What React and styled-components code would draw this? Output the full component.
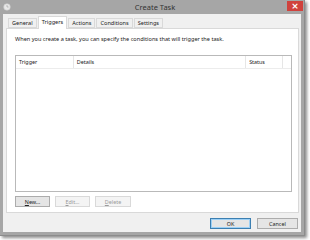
import React from 'react';
import styled, { createGlobalStyle } from 'styled-components';

const GlobalStyle = createGlobalStyle`
  body {
    margin: 0;
    background: #ffffff;
    font-family: "Noto Sans", "Open Sans", sans-serif;
  }
`

const tabs = ['General', 'Triggers', 'Actions', 'Conditions', 'Settings']
const columns = [
  { label: 'Trigger', width: 58 },
  { label: 'Details', width: 173 },
  { label: 'Status', width: 37 },
  { label: '', width: 8 },
]

export default function App() {
  return (
    <Stage>
      <GlobalStyle />
      <Window>
        <TitleBar>
          <AppIcon viewBox="0 0 8 8">
            <circle cx="4" cy="4" r="3.3" fill="#e8e8e8" stroke="#c9c9c9" strokeWidth="0.6" />
            <path d="M4 2v2h1.6" stroke="#9a9a9a" strokeWidth="0.6" fill="none" />
          </AppIcon>
          <Title>Create Task</Title>
          <Close>×</Close>
        </TitleBar>
        <Client>
          <TabRow>
            {tabs.map((t) => (
              <Tab key={t} $active={t === 'Triggers'}>{t}</Tab>
            ))}
          </TabRow>
          <Panel>
            <Intro>When you create a task, you can specify the conditions that will trigger the task.</Intro>
            <List>
              <Header>
                {columns.map((c, i) => (
                  <HeaderCell key={i} style={{ width: c.width }}>{c.label}</HeaderCell>
                ))}
              </Header>
            </List>
            <ListButtons>
              <Button $w={35}><u>N</u>ew...</Button>
              <Button $w={35} disabled><u>E</u>dit...</Button>
              <Button $w={36} disabled><u>D</u>elete</Button>
            </ListButtons>
          </Panel>
          <Footer>
            <Button $w={41} $default>OK</Button>
            <Button $w={41}>Cancel</Button>
          </Footer>
        </Client>
      </Window>
    </Stage>
  )
}

const Stage = styled.div`
  width: 310px;
  height: 240px;
  overflow: hidden;
  background: #ffffff;
`
const Window = styled.div`
  width: 304px;
  height: 235px;
  background: #a6a6a6;
  border-right: 1px solid #8c8c8c;
  border-bottom: 1px solid #8c8c8c;
  box-shadow: 2px 2px 3px rgba(0, 0, 0, 0.45);
  display: flex;
  flex-direction: column;
`
const TitleBar = styled.div`
  height: 14px;
  display: flex;
  align-items: flex-start;
  padding: 0 1px 0 2px;
`
const AppIcon = styled.svg`
  width: 8px;
  height: 8px;
  margin: 3px 0 0 1px;
`
const Title = styled.div`
  flex: 1;
  text-align: center;
  font-size: 7.5px;
  line-height: 14px;
  color: #333333;
  padding-left: 12px;
`
const Close = styled.div`
  width: 16px;
  min-width: 16px;
  height: 10px;
  margin-top: 1px;
  background: #d0423d;
  color: #ffffff;
  font-family: "DejaVu Sans", sans-serif;
  font-weight: bold;
  font-size: 9px;
  line-height: 10px;
  text-align: center;
`
const Client = styled.div`
  flex: 1;
  margin: 0 3px 3px 3px;
  background: #f0f0f0;
  display: flex;
  flex-direction: column;
  padding: 4px 2px 0 3px;
`
const TabRow = styled.div`
  display: flex;
  align-items: flex-end;
  height: 10px;
  padding-left: 2px;
  gap: 1px;
  position: relative;
  z-index: 1;
`
const Tab = styled.div`
  height: ${(p) => (p.$active ? '13px' : '10px')};
  margin-bottom: ${(p) => (p.$active ? '-1px' : '0')};
  padding: 0 3px;
  box-sizing: border-box;
  border: 1px solid #d9d9d9;
  border-bottom: ${(p) => (p.$active ? 'none' : '1px solid #d9d9d9')};
  background: ${(p) => (p.$active ? '#ffffff' : '#f0f0f0')};
  font-size: 5.6px;
  line-height: ${(p) => (p.$active ? '10px' : '8px')};
  color: #222;
  white-space: nowrap;
`
const Panel = styled.div`
  height: 185px;
  box-sizing: border-box;
  background: #ffffff;
  border: 1px solid #d9d9d9;
  display: flex;
  flex-direction: column;
  padding: 0 6px 0 8px;
`
const Intro = styled.div`
  font-size: 5.6px;
  color: #222;
  margin-top: 6px;
  height: 20px;
  white-space: nowrap;
`
const List = styled.div`
  height: 137px;
  box-sizing: border-box;
  border: 1px solid #b9b9b9;
  background: #ffffff;
`
const Header = styled.div`
  display: flex;
  height: 12px;
  border-bottom: 1px solid #ececec;
`
const HeaderCell = styled.div`
  box-sizing: border-box;
  height: 12px;
  padding-left: 3px;
  border-right: 1px solid #e6e6e6;
  font-size: 5.4px;
  line-height: 12px;
  color: #222;
  &:last-child {
    border-right: none;
  }
`
const ListButtons = styled.div`
  display: flex;
  gap: 5px;
  margin-top: 4px;
`
const Button = styled.button`
  width: ${(p) => p.$w}px;
  height: 11px;
  padding: 0;
  box-sizing: border-box;
  background: ${(p) => (p.disabled ? '#f4f4f4' : '#e5e5e5')};
  border: 1px solid ${(p) => (p.$default ? '#3c7fb1' : p.disabled ? '#d9d9d9' : '#acacac')};
  box-shadow: ${(p) => (p.$default ? 'inset 0 0 0 1px #9dd0f5' : 'none')};
  font-family: inherit;
  font-size: 5.4px;
  color: ${(p) => (p.disabled ? '#9a9a9a' : '#222')};
  display: flex;
  align-items: center;
  justify-content: center;
  u {
    text-decoration: underline;
  }
`
const Footer = styled.div`
  flex: 1;
  display: flex;
  justify-content: flex-end;
  align-items: flex-start;
  gap: 6px;
  padding-top: 5px;
  padding-right: 1px;
`
